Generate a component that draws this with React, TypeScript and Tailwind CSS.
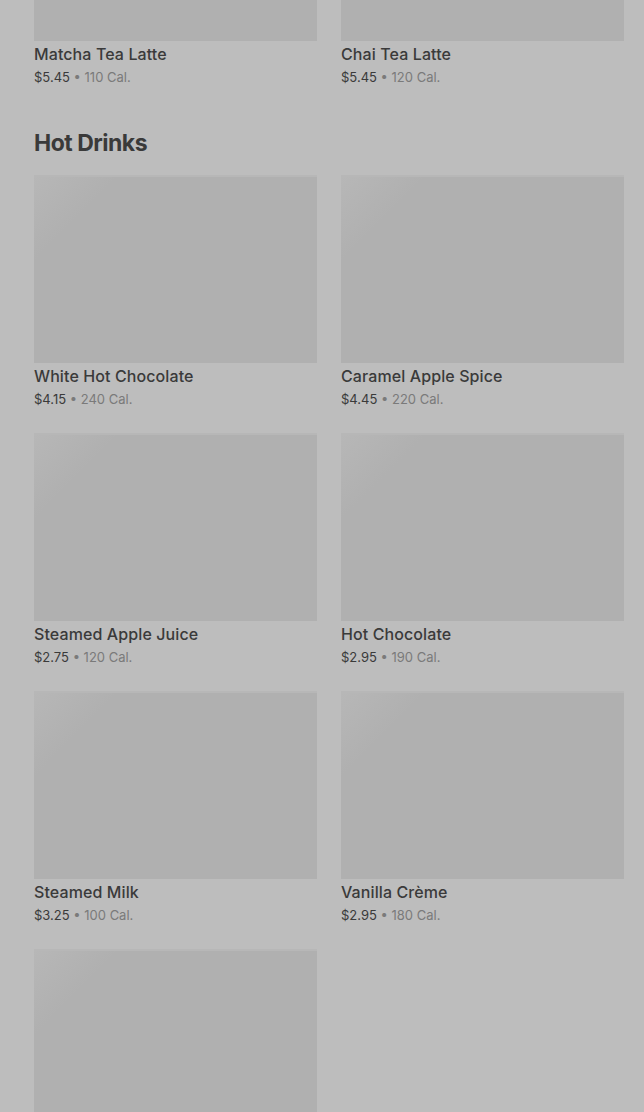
import React from "react";

type Item = { name: string; price: string; cal: string };

const top: Item[] = [
  { name: "Matcha Tea Latte", price: "$5.45", cal: "110 Cal." },
  { name: "Chai Tea Latte", price: "$5.45", cal: "120 Cal." },
];

const hot: Item[] = [
  { name: "White Hot Chocolate", price: "$4.15", cal: "240 Cal." },
  { name: "Caramel Apple Spice", price: "$4.45", cal: "220 Cal." },
  { name: "Steamed Apple Juice", price: "$2.75", cal: "120 Cal." },
  { name: "Hot Chocolate", price: "$2.95", cal: "190 Cal." },
  { name: "Steamed Milk", price: "$3.25", cal: "100 Cal." },
  { name: "Vanilla Crème", price: "$2.95", cal: "180 Cal." },
  { name: "", price: "", cal: "" },
];

function Card({ item }: { item: Item }) {
  return (
    <div className="flex flex-col">
      <div className="h-[188px] bg-[#b0b0b0] bg-[linear-gradient(135deg,#b7b7b7_0%,#b0b0b0_18%,#b0b0b0_100%)] border-t-2 border-[#b7b7b7]" />
      {item.name && (
        <div className="pt-[3px]">
          <div className="text-[16px] leading-[20px] font-medium text-[#3a3a3a] tracking-[0.1px]">{item.name}</div>
          <div className="mt-[4px] text-[13px] leading-[18px]">
            <span className="text-[#3a3a3a]">{item.price}</span>
            <span className="text-[#7a7a7a]"> • {item.cal}</span>
          </div>
        </div>
      )}
    </div>
  );
}

export default function App() {
  return (
    <div className="w-[644px] h-[1112px] overflow-hidden bg-[#bdbdbd]" style={{ fontFamily: "Inter, 'Noto Sans', sans-serif" }}>
      <div className="px-[34px] pr-[20px] mt-[-147px]">
        <div className="grid grid-cols-2 gap-x-[24px]">
          {top.map((it, i) => (
            <Card key={i} item={it} />
          ))}
        </div>
        <h2 className="mt-[41px] text-[23px] leading-[32px] font-bold text-[#3a3a3a] tracking-[-0.5px]">Hot Drinks</h2>
        <div className="mt-[16px] grid grid-cols-2 gap-x-[24px] gap-y-[25px]">
          {hot.map((it, i) => (
            <Card key={i} item={it} />
          ))}
        </div>
      </div>
    </div>
  );
}
